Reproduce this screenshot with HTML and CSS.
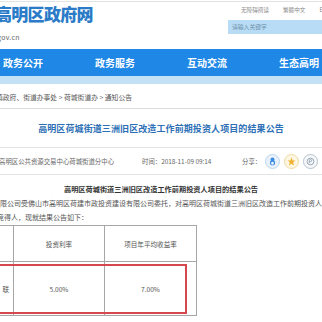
FILE: index.html
```html
<!DOCTYPE html>
<html lang="zh-CN">
<head>
<meta charset="utf-8">
<title>高明区政府网</title>
<link rel="stylesheet" href="styles.css">
</head>
<body>
<div class="page">
  <div class="topline"></div>
  <header class="head">
    <div class="brand">
      <div class="logo">高明区政府网</div>
      <div class="domain">gov.cn</div>
    </div>
    <div class="tools">
      <div class="links"><span>无障碍阅读</span><span>繁體中文</span><span>English</span></div>
      <div class="search">请输入关键字</div>
    </div>
  </header>
  <nav class="nav">
    <span>政务公开</span><span>政务服务</span><span>互动交流</span><span>生态高明</span>
  </nav>
  <div class="strip"></div>
  <div class="crumb">镇政府、街道办事处 &gt; 荷城街道办 &gt; 通知公告</div>
  <h1 class="title">高明区荷城街道三洲旧区改造工作前期投资人项目的结果公告</h1>
  <div class="info">
    <span class="src">高明区公共资源交易中心荷城街道分中心</span>
    <span class="time">时间：2018-11-09 09:14</span>
    <span class="share">分享：
      <span class="ic qq"><svg viewBox="0 0 16 16" width="9" height="9"><ellipse cx="8" cy="5" rx="3.6" ry="4" fill="#3a8be0"/><ellipse cx="8" cy="10.5" rx="4.6" ry="4.2" fill="#3a8be0"/><ellipse cx="8" cy="11" rx="2.4" ry="2.6" fill="#e8f2fb"/></svg></span>
      <span class="ic qz"><svg viewBox="0 0 16 16" width="9" height="9"><polygon points="8,1 10,6 15,6 11,9.5 12.5,15 8,11.8 3.5,15 5,9.5 1,6 6,6" fill="#f0b22e"/></svg></span>
      <span class="ic wb"><svg viewBox="0 0 16 16" width="9" height="9"><circle cx="8" cy="8" r="6" fill="none" stroke="#7f93a3" stroke-width="1.4"/><path d="M6 11 L6 6 Q6 4.5 8 4.5 Q10 4.5 10 6.5 Q10 8.3 8 8.3 L6.5 8.3" fill="none" stroke="#7f93a3" stroke-width="1.3"/></svg></span>
      <span class="ic wx"></span>
    </span>
  </div>
  <article class="body">
    <h2 class="subtitle">高明区荷城街道三洲旧区改造工作前期投资人项目的结果公告</h2>
    <p class="line">限公司受佛山市高明区荷建市政投资建设有限公司委托，对高明区荷城街道三洲旧区改造工作前期投资人项目进行</p>
    <p class="line l2">竞得人，现就结果公告如下：</p>
    <div class="tablewrap">
      <table class="res">
        <colgroup><col class="c1"><col class="c2"><col class="c3"></colgroup>
        <tr class="hr"><td></td><td>投资利率</td><td>项目年平均收益率</td></tr>
        <tr class="dr"><td class="first">联</td><td>5.00%</td><td>7.00%</td></tr>
      </table>
      <div class="mark"></div>
    </div>
  </article>
</div>
</body>
</html>
```

FILE: styles.css
```css
html, body {
  margin: 0;
  padding: 0;
  background: #fff;
}
.page {
  width: 322px;
  height: 322px;
  overflow: hidden;
  font-family: "Noto Sans CJK SC", "Noto Sans", sans-serif;
  color: #555;
}
.topline {
  height: 1px;
  margin-top: 1px;
  background: #e2e2e2;
}
.head {
  height: 47px;
  display: flex;
  justify-content: space-between;
}
.brand {
  flex-shrink: 0;
  margin-left: -5px;
  padding-top: 1px;
}
.logo {
  font-size: 17px;
  line-height: 21px;
  font-weight: 900;
  color: #2b7bc8;
  letter-spacing: -0.7px;
  white-space: nowrap;
}
.domain {
  margin-top: 9px;
  margin-left: 2px;
  font-size: 7px;
  line-height: 9px;
  color: #666;
  letter-spacing: 0.3px;
}
.tools {
  width: 94px;
  flex-shrink: 0;
  overflow: hidden;
}
.links {
  margin-top: 3px;
  padding-left: 13px;
  height: 10px;
  display: flex;
  gap: 14px;
  font-size: 5.6px;
  line-height: 10px;
  color: #888;
  white-space: nowrap;
}
.search {
  margin-top: 5px;
  height: 14px;
  width: 110px;
  background: #b8dcf5;
  padding-left: 4px;
  font-size: 5.8px;
  line-height: 14px;
  color: #6d8ea8;
}
.nav {
  height: 27px;
  background: #1f88e6;
  display: flex;
  white-space: nowrap;
}
.nav span {
  width: 89px;
  flex-shrink: 0;
  padding-left: 3px;
  font-size: 10px;
  font-weight: 700;
  line-height: 27px;
  color: #fff;
}
.strip {
  height: 8px;
  background: #c3e2f6;
}
.crumb {
  height: 24px;
  line-height: 26px;
  margin-left: -4px;
  font-size: 6.8px;
  color: #555;
  white-space: nowrap;
  border-bottom: 1px solid #dcdcdc;
}
.title {
  margin: 0;
  height: 38px;
  line-height: 40px;
  text-align: center;
  font-size: 9px;
  font-weight: 700;
  color: #2e70b6;
  white-space: nowrap;
  letter-spacing: 0.1px;
  border-bottom: 1px solid #e3e3e3;
}
.info {
  height: 26px;
  display: flex;
  align-items: center;
  font-size: 6.4px;
  color: #666;
  white-space: nowrap;
  border-bottom: 1px solid #e3e3e3;
}
.src {
  width: 143px;
  flex-shrink: 0;
  margin-left: -1px;
}
.time {
  width: 100px;
  flex-shrink: 0;
}
.share {
  display: flex;
  align-items: center;
  gap: 4px;
}
.ic {
  width: 13px;
  height: 13px;
  border-radius: 50%;
  border: 1px solid #bcd6ee;
  background: #e9f2fb;
  display: flex;
  align-items: center;
  justify-content: center;
  flex-shrink: 0;
}
.ic.qz {
  background: #fdf6e2;
  border-color: #f0daa2;
}
.ic.wb {
  background: #f6f8fa;
  border-color: #b4c3cf;
}
.ic.wx {
  background: #eef8ee;
  border-color: #7cc47e;
}
.body {
  padding-top: 7px;
}
.subtitle {
  margin: 0;
  height: 14px;
  line-height: 14px;
  text-align: center;
  font-size: 7.2px;
  font-weight: 700;
  color: #333;
  white-space: nowrap;
}
.line {
  margin: 0;
  height: 14px;
  line-height: 14px;
  font-size: 7px;
  color: #555;
  white-space: nowrap;
}
.line.l2 {
  margin-left: -3px;
}
.tablewrap {
  position: relative;
  margin-top: 1px;
  margin-left: -80px;
  width: 276px;
}
.res {
  border-collapse: collapse;
  table-layout: fixed;
  width: 276px;
  font-size: 6.6px;
  color: #555;
}
.c1 { width: 93px; }
.c2 { width: 91px; }
.c3 { width: 92px; }
.res td {
  border: 1px solid #a6a6a6;
  padding: 0;
  text-align: center;
  white-space: nowrap;
}
.hr td {
  height: 35px;
}
.dr td {
  height: 53px;
}
.res td.first {
  text-align: right;
  padding-right: 4px;
}
.mark {
  position: absolute;
  left: 0;
  top: 39px;
  width: 263px;
  height: 46px;
  border: 2px solid #d5484e;
}
```
